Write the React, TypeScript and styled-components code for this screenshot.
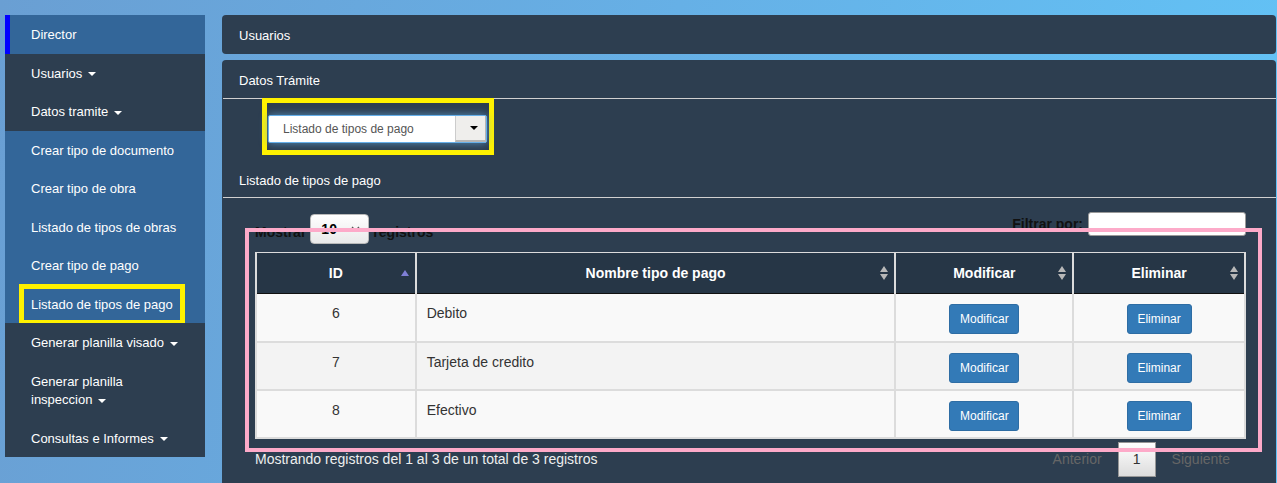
import styled, { createGlobalStyle } from "styled-components";

const GlobalStyle = createGlobalStyle`
    html, body {
        margin: 0;
        padding: 0;
    }
    body {
        font-family: "Liberation Sans", Arial, sans-serif;
        background: linear-gradient(100deg, #6a9fd3 0%, #66b0e6 50%, #62c3f6 100%);
        min-height: 483px;
        overflow: hidden;
    }
`;

const Page = styled.div`
    display: flex;
    align-items: flex-start;
    gap: 17px;
    padding: 15px 1px 0 5px;
    height: 483px;
    box-sizing: border-box;
`;

const Sidebar = styled.nav`
    width: 200px;
    flex-shrink: 0;
    display: flex;
    flex-direction: column;
    font-size: 13px;
    color: #ffffff;
`;

const NavItem = styled.div<{ $tone: "blue" | "dark"; $active?: boolean; $marked?: boolean }>`
    position: relative;
    padding: 11px 22px 9px ${(p) => (p.$active ? "21px" : "26px")};
    line-height: 18.5px;
    background-color: ${(p) => (p.$tone === "blue" ? "#336699" : "#2d3e50")};
    border-left: ${(p) => (p.$active ? "5px solid #0000ff" : "none")};
    &::after {
        content: "";
        display: ${(p) => (p.$marked ? "block" : "none")};
        position: absolute;
        left: 14px;
        right: 20px;
        top: -1px;
        bottom: -2px;
        border: 5px solid #fff200;
    }
`;

const Caret = styled.span<{ $color?: string }>`
    display: inline-block;
    width: 0;
    height: 0;
    margin-left: 6px;
    vertical-align: middle;
    border-top: 4px solid ${(p) => p.$color ?? "#ffffff"};
    border-left: 4px solid transparent;
    border-right: 4px solid transparent;
`;

const Main = styled.main`
    flex: 1;
    display: flex;
    flex-direction: column;
    gap: 6px;
    min-width: 0;
`;

const Panel = styled.section<{ $tall?: boolean }>`
    background-color: #2d3e50;
    border-radius: 4px;
    color: #ffffff;
    font-size: 13px;
    padding-bottom: ${(p) => (p.$tall ? "24px" : "0")};
`;

const PanelHeading = styled.div<{ $ruled?: boolean }>`
    padding: 12px 17px ${(p) => (p.$ruled ? "8px" : "9px")};
    line-height: 18px;
    border-bottom: ${(p) => (p.$ruled ? "1px solid #d0d0d0" : "none")};
    margin-left: ${(p) => (p.$ruled ? "1px" : "0")};
    padding-left: ${(p) => (p.$ruled ? "16px" : "17px")};
`;

const SubHeading = styled.div`
    margin-left: 1px;
    padding: 17px 16px 7px;
    line-height: 18px;
    border-bottom: 1px solid #d0d0d0;
`;

const SelectArea = styled.div`
    padding: 0 0 0 40px;
`;

const SelectFrame = styled.div`
    display: inline-block;
    margin-top: -1px;
    border: 5px solid #fff200;
    padding: 12px 2px 7px 1px;
`;

const FakeSelect = styled.div`
    width: 219px;
    height: 28px;
    box-sizing: border-box;
    display: flex;
    align-items: stretch;
    background-color: #ffffff;
    border: 1px solid #66afe9;
    border-radius: 2px;
    box-shadow: 0 0 8px rgba(102, 175, 233, 0.7);
`;

const SelectText = styled.span`
    flex: 1;
    padding-left: 14px;
    display: flex;
    align-items: center;
    font-size: 12px;
    color: #555555;
`;

const SelectButton = styled.span`
    width: 29px;
    display: flex;
    align-items: center;
    justify-content: center;
    background-color: #efeeec;
    border-left: 1px solid #cccccc;
    border-bottom: 2px solid #b5b5b5;
    border-right: 1px solid #b5b5b5;
`;

const TableSection = styled.div`
    position: relative;
    padding: 15px 30px 0 33px;
`;

const Controls = styled.div`
    display: flex;
    justify-content: space-between;
    align-items: center;
    height: 31px;
    font-size: 14px;
    font-weight: bold;
    color: #111111;
`;

const LengthLabel = styled.label`
    display: flex;
    align-items: center;
    gap: 4px;
    padding-top: 6px;
`;

const LengthSelect = styled.span`
    display: inline-flex;
    align-items: center;
    gap: 14px;
    width: 59px;
    height: 30px;
    box-sizing: border-box;
    padding-left: 10px;
    margin-top: -6px;
    background: linear-gradient(#ffffff, #e9e9e9);
    border: 1px solid #b9b9b9;
    border-radius: 4px;
    color: #000000;
    font-weight: bold;
`;

const FilterLabel = styled.label`
    display: flex;
    align-items: center;
    gap: 5px;
    align-self: flex-start;
    margin-top: -1px;
`;

const FilterInput = styled.span`
    display: inline-block;
    width: 158px;
    height: 24px;
    box-sizing: border-box;
    background-color: #ffffff;
    border: 1px solid #999999;
    border-radius: 3px;
`;

const Table = styled.table`
    width: 100%;
    margin-top: 8px;
    border-collapse: collapse;
    font-size: 14px;
    color: #333333;
    border-bottom: 1px solid #111111;
`;

const HeadCell = styled.th<{ $width: number }>`
    position: relative;
    width: ${(p) => p.$width}px;
    height: 41px;
    box-sizing: border-box;
    padding: 0 18px;
    background-color: #263646;
    color: #ffffff;
    font-weight: bold;
    text-align: center;
    border: 2px solid #dcdcdc;
    border-top-width: 1px;
    border-bottom: 1px solid #111111;
`;

const SortIcon = styled.svg`
    position: absolute;
    right: 5px;
    top: 50%;
    transform: translateY(-50%);
`;

const Row = styled.tr<{ $odd: boolean }>`
    height: 48px;
    background-color: ${(p) => (p.$odd ? "#f3f3f3" : "#f9f9f9")};
`;

const Cell = styled.td<{ $align?: "left" | "center" }>`
    box-sizing: border-box;
    padding: 10px 10px 10px;
    vertical-align: top;
    text-align: ${(p) => p.$align ?? "center"};
    border: 2px solid #dcdcdc;
    border-top-width: 0;
    line-height: 18px;
`;

const ActionCell = styled.td`
    vertical-align: middle;
    text-align: center;
    padding: 6px 10px 2px;
    border: 2px solid #dcdcdc;
    border-top-width: 0;
`;

const ActionButton = styled.button<{ $width: number }>`
    width: ${(p) => p.$width}px;
    height: 30px;
    padding: 0;
    background-color: #337ab7;
    border: 1px solid #2e6da4;
    border-radius: 3px;
    color: #ffffff;
    font-family: inherit;
    font-size: 12px;
`;

const Footer = styled.div`
    display: flex;
    justify-content: space-between;
    align-items: flex-start;
    padding-top: 3px;
    font-size: 14px;
`;

const Info = styled.span`
    color: #eeeeee;
    padding-top: 9px;
`;

const Pager = styled.div`
    display: flex;
    align-items: center;
    color: #666666;
`;

const PagerLink = styled.span`
    padding: 0 16px;
`;

const PageBox = styled.span`
    width: 38px;
    height: 35px;
    box-sizing: border-box;
    display: flex;
    align-items: center;
    justify-content: center;
    background: linear-gradient(#ffffff, #dcdcdc);
    border: 1px solid #979797;
    color: #333333;
`;

const PinkFrame = styled.div`
    position: absolute;
    left: 23px;
    top: 30px;
    width: 1017px;
    height: 224px;
    box-sizing: border-box;
    border: 4px solid #fdaac9;
    pointer-events: none;
`;

type NavEntry = {
    label: string;
    tone: "blue" | "dark";
    caret?: boolean;
    active?: boolean;
    marked?: boolean;
};

const navEntries: NavEntry[] = [
    { label: "Director", tone: "blue", active: true },
    { label: "Usuarios", tone: "dark", caret: true },
    { label: "Datos tramite", tone: "dark", caret: true },
    { label: "Crear tipo de documento", tone: "blue" },
    { label: "Crear tipo de obra", tone: "blue" },
    { label: "Listado de tipos de obras", tone: "blue" },
    { label: "Crear tipo de pago", tone: "blue" },
    { label: "Listado de tipos de pago", tone: "blue", marked: true },
    { label: "Generar planilla visado", tone: "dark", caret: true },
    { label: "Generar planilla inspeccion", tone: "dark", caret: true },
    { label: "Consultas e Informes", tone: "dark", caret: true },
];

const pagos = [
    { id: 6, nombre: "Debito" },
    { id: 7, nombre: "Tarjeta de credito" },
    { id: 8, nombre: "Efectivo" },
];

const columns = [
    { title: "ID", width: 160, sort: "asc" },
    { title: "Nombre tipo de pago", width: 481, sort: "both" },
    { title: "Modificar", width: 178, sort: "both" },
    { title: "Eliminar", width: 172, sort: "both" },
];

const SortMark = ({ mode }: { mode: string }) =>
    mode === "asc" ? (
        <SortIcon width="10" height="8" viewBox="0 0 10 8">
            <path d="M5 1 L9 7 L1 7 Z" fill="#7f7fd5" />
        </SortIcon>
    ) : (
        <SortIcon width="10" height="16" viewBox="0 0 10 16">
            <path d="M5 1 L9 7 L1 7 Z" fill="#b8b8b8" />
            <path d="M5 15 L9 9 L1 9 Z" fill="#b8b8b8" />
        </SortIcon>
    );

const App = () => {
    return (
        <>
            <GlobalStyle />
            <Page>
                <Sidebar>
                    {navEntries.map((entry) => (
                        <NavItem
                            key={entry.label}
                            $tone={entry.tone}
                            $active={entry.active}
                            $marked={entry.marked}
                        >
                            {entry.label}
                            {entry.caret && <Caret />}
                        </NavItem>
                    ))}
                </Sidebar>
                <Main>
                    <Panel>
                        <PanelHeading>Usuarios</PanelHeading>
                    </Panel>
                    <Panel $tall>
                        <PanelHeading $ruled>Datos Trámite</PanelHeading>
                        <SelectArea>
                            <SelectFrame>
                                <FakeSelect>
                                    <SelectText>Listado de tipos de pago</SelectText>
                                    <SelectButton>
                                        <Caret $color="#000000" />
                                    </SelectButton>
                                </FakeSelect>
                            </SelectFrame>
                        </SelectArea>
                        <SubHeading>Listado de tipos de pago</SubHeading>
                        <TableSection>
                            <Controls>
                                <LengthLabel>
                                    Mostrar
                                    <LengthSelect>
                                        10
                                        <svg width="9" height="6" viewBox="0 0 9 6">
                                            <path d="M1 1 L4.5 4.5 L8 1" stroke="#555" strokeWidth="1.3" fill="none" />
                                        </svg>
                                    </LengthSelect>
                                    registros
                                </LengthLabel>
                                <FilterLabel>
                                    Filtrar por:
                                    <FilterInput />
                                </FilterLabel>
                            </Controls>
                            <Table>
                                <thead>
                                    <tr>
                                        {columns.map((col) => (
                                            <HeadCell key={col.title} $width={col.width}>
                                                {col.title}
                                                <SortMark mode={col.sort} />
                                            </HeadCell>
                                        ))}
                                    </tr>
                                </thead>
                                <tbody>
                                    {pagos.map((pago, i) => (
                                        <Row key={pago.id} $odd={i % 2 === 1}>
                                            <Cell>{pago.id}</Cell>
                                            <Cell $align="left">{pago.nombre}</Cell>
                                            <ActionCell>
                                                <ActionButton $width={70}>Modificar</ActionButton>
                                            </ActionCell>
                                            <ActionCell>
                                                <ActionButton $width={65}>Eliminar</ActionButton>
                                            </ActionCell>
                                        </Row>
                                    ))}
                                </tbody>
                            </Table>
                            <Footer>
                                <Info>Mostrando registros del 1 al 3 de un total de 3 registros</Info>
                                <Pager>
                                    <PagerLink>Anterior</PagerLink>
                                    <PageBox>1</PageBox>
                                    <PagerLink>Siguiente</PagerLink>
                                </Pager>
                            </Footer>
                            <PinkFrame />
                        </TableSection>
                    </Panel>
                </Main>
            </Page>
        </>
    );
};

export default App;
